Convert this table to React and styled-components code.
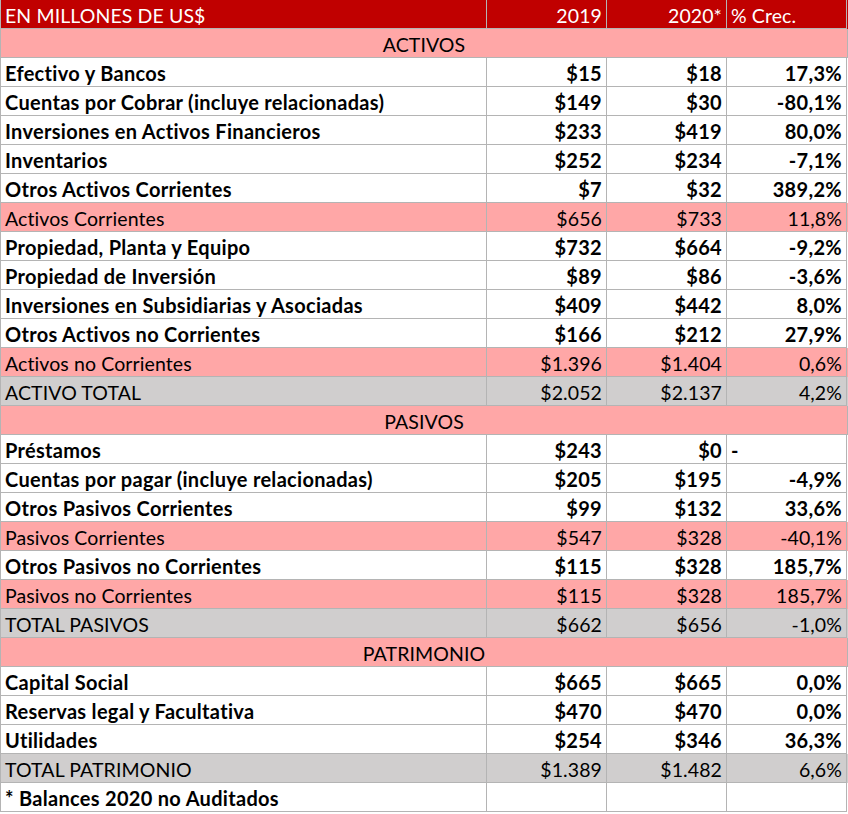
import React from "react";
import styled, { createGlobalStyle } from "styled-components";

const GlobalStyle = createGlobalStyle`
  html, body {
    margin: 0;
    padding: 0;
    background: #ffffff;
  }
  body {
    font-family: Lato, "Open Sans", "Liberation Sans", sans-serif;
  }
`;

const COLORS = {
  head: "#c00000",
  pink: "#ffa7a7",
  grey: "#d0cece",
  white: "#ffffff",
  line: "#b4b4b4",
};

const Sheet = styled.div`
  width: 848px;
  border-left: 1px solid ${COLORS.line};
  box-sizing: border-box;
`;

const Row = styled.div`
  display: grid;
  grid-template-columns: 486px 120px 120px 120px;
  height: 29px;
  background: ${(p) => COLORS[p.$tone] || COLORS.white};
  color: ${(p) => (p.$tone === "head" ? "#ffffff" : "#000000")};
  font-weight: ${(p) => (p.$bold ? 700 : 400)};
  font-size: ${(p) => (p.$bold ? "20px" : "19.5px")};
  letter-spacing: ${(p) => (p.$bold ? "0.3px" : "0.1px")};
`;

const Cell = styled.div`
  box-sizing: border-box;
  height: 29px;
  display: flex;
  align-items: center;
  justify-content: ${(p) => (p.$align === "right" ? "flex-end" : "flex-start")};
  padding: 2px 4px 0 4px;
  border-right: 1px solid ${COLORS.line};
  border-bottom: 1px solid ${COLORS.line};
  white-space: nowrap;
  overflow: hidden;
`;

const Section = styled.div`
  height: 29px;
  box-sizing: border-box;
  background: ${COLORS.pink};
  border-bottom: 1px solid ${COLORS.line};
  border-right: 1px solid ${COLORS.line};
  display: flex;
  align-items: center;
  justify-content: center;
  padding-top: 2px;
  font-size: 19.5px;
  letter-spacing: 0.1px;
  color: #000000;
`;

const rows = [
  { type: "section", label: "ACTIVOS" },
  { label: "Efectivo y Bancos", a: "$15", b: "$18", c: "17,3%", bold: true },
  { label: "Cuentas por Cobrar (incluye relacionadas)", a: "$149", b: "$30", c: "-80,1%", bold: true },
  { label: "Inversiones en Activos Financieros", a: "$233", b: "$419", c: "80,0%", bold: true },
  { label: "Inventarios", a: "$252", b: "$234", c: "-7,1%", bold: true },
  { label: "Otros Activos Corrientes", a: "$7", b: "$32", c: "389,2%", bold: true },
  { label: "Activos Corrientes", a: "$656", b: "$733", c: "11,8%", tone: "pink" },
  { label: "Propiedad, Planta y Equipo", a: "$732", b: "$664", c: "-9,2%", bold: true },
  { label: "Propiedad de Inversión", a: "$89", b: "$86", c: "-3,6%", bold: true },
  { label: "Inversiones en Subsidiarias y Asociadas", a: "$409", b: "$442", c: "8,0%", bold: true },
  { label: "Otros Activos no Corrientes", a: "$166", b: "$212", c: "27,9%", bold: true },
  { label: "Activos no Corrientes", a: "$1.396", b: "$1.404", c: "0,6%", tone: "pink" },
  { label: "ACTIVO TOTAL", a: "$2.052", b: "$2.137", c: "4,2%", tone: "grey" },
  { type: "section", label: "PASIVOS" },
  { label: "Préstamos", a: "$243", b: "$0", c: "-", cLeft: true, bold: true },
  { label: "Cuentas por pagar (incluye relacionadas)", a: "$205", b: "$195", c: "-4,9%", bold: true },
  { label: "Otros Pasivos Corrientes", a: "$99", b: "$132", c: "33,6%", bold: true },
  { label: "Pasivos Corrientes", a: "$547", b: "$328", c: "-40,1%", tone: "pink" },
  { label: "Otros Pasivos no Corrientes", a: "$115", b: "$328", c: "185,7%", bold: true },
  { label: "Pasivos no Corrientes", a: "$115", b: "$328", c: "185,7%", tone: "pink" },
  { label: "TOTAL PASIVOS", a: "$662", b: "$656", c: "-1,0%", tone: "grey" },
  { type: "section", label: "PATRIMONIO" },
  { label: "Capital Social", a: "$665", b: "$665", c: "0,0%", bold: true },
  { label: "Reservas legal y Facultativa", a: "$470", b: "$470", c: "0,0%", bold: true },
  { label: "Utilidades", a: "$254", b: "$346", c: "36,3%", bold: true },
  { label: "TOTAL PATRIMONIO", a: "$1.389", b: "$1.482", c: "6,6%", tone: "grey" },
  { label: "* Balances 2020 no Auditados", a: "", b: "", c: "", bold: true },
];

export default function App() {
  return (
    <>
      <GlobalStyle />
      <Sheet>
        <Row $tone="head">
          <Cell>EN MILLONES DE US$</Cell>
          <Cell $align="right">2019</Cell>
          <Cell $align="right">2020*</Cell>
          <Cell>% Crec.</Cell>
        </Row>
        {rows.map((r, i) =>
          r.type === "section" ? (
            <Section key={i}>{r.label}</Section>
          ) : (
            <Row key={i} $tone={r.tone} $bold={r.bold}>
              <Cell>{r.label}</Cell>
              <Cell $align="right">{r.a}</Cell>
              <Cell $align="right">{r.b}</Cell>
              <Cell $align={r.cLeft ? "left" : "right"}>{r.c}</Cell>
            </Row>
          )
        )}
      </Sheet>
    </>
  );
}
